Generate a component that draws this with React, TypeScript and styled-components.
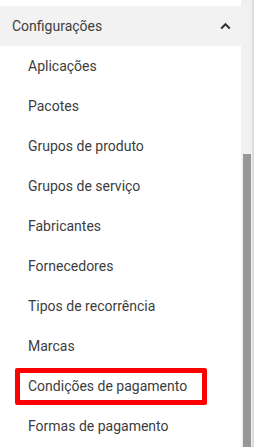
import React from "react";
import styled, { createGlobalStyle } from "styled-components";

const GlobalStyle = createGlobalStyle`
  html, body {
    margin: 0;
    padding: 0;
    background: #ffffff;
  }
  body {
    font-family: Roboto, "Liberation Sans", Arial, sans-serif;
  }
`;

const Page = styled.div`
  display: flex;
  width: 254px;
  height: 447px;
  overflow: hidden;
`;

const Menu = styled.nav`
  width: 241px;
  padding-top: 6px;
  display: flex;
  flex-direction: column;
`;

const GroupHeader = styled.div`
  height: 40px;
  display: flex;
  align-items: center;
  justify-content: space-between;
  padding: 0 10px 0 12px;
  background: #f2f2f2;
  color: #3d3d3d;
  font-size: 14px;
`;

const Item = styled.div`
  height: 40px;
  display: flex;
  align-items: center;
  padding-left: 28px;
  color: #3d3d3d;
  font-size: 14px;
`;

const Highlight = styled.span`
  box-sizing: border-box;
  display: flex;
  align-items: center;
  height: 37px;
  width: 192px;
  margin-left: -13px;
  padding-left: 8px;
  border: 5px solid #ff0000;
  border-radius: 2px;
`;

const Track = styled.div`
  width: 13px;
  display: flex;
  flex-direction: column;
  padding-top: 154px;
  background: #f1f1f1;
  border-right: 2px solid #dcdcdc;
  box-sizing: border-box;
`;

const Thumb = styled.div`
  flex: 1;
  margin-left: 2px;
  width: 8px;
  background: #979797;
`;

const ChevronUp = () => (
  <svg width="11" height="8" viewBox="0 0 11 8" fill="none">
    <path d="M1.2 6.5 L5.5 2.2 L9.8 6.5" stroke="#333" strokeWidth="2" />
  </svg>
);

const items = [
  "Aplicações",
  "Pacotes",
  "Grupos de produto",
  "Grupos de serviço",
  "Fabricantes",
  "Fornecedores",
  "Tipos de recorrência",
  "Marcas",
  "Condições de pagamento",
  "Formas de pagamento",
];

export default function App() {
  return (
    <>
      <GlobalStyle />
      <Page>
        <Menu>
          <GroupHeader>
            <span>Configurações</span>
            <ChevronUp />
          </GroupHeader>
          {items.map((label) => (
            <Item key={label}>
              {label === "Condições de pagamento" ? <Highlight>{label}</Highlight> : label}
            </Item>
          ))}
        </Menu>
        <Track>
          <Thumb />
        </Track>
      </Page>
    </>
  );
}
